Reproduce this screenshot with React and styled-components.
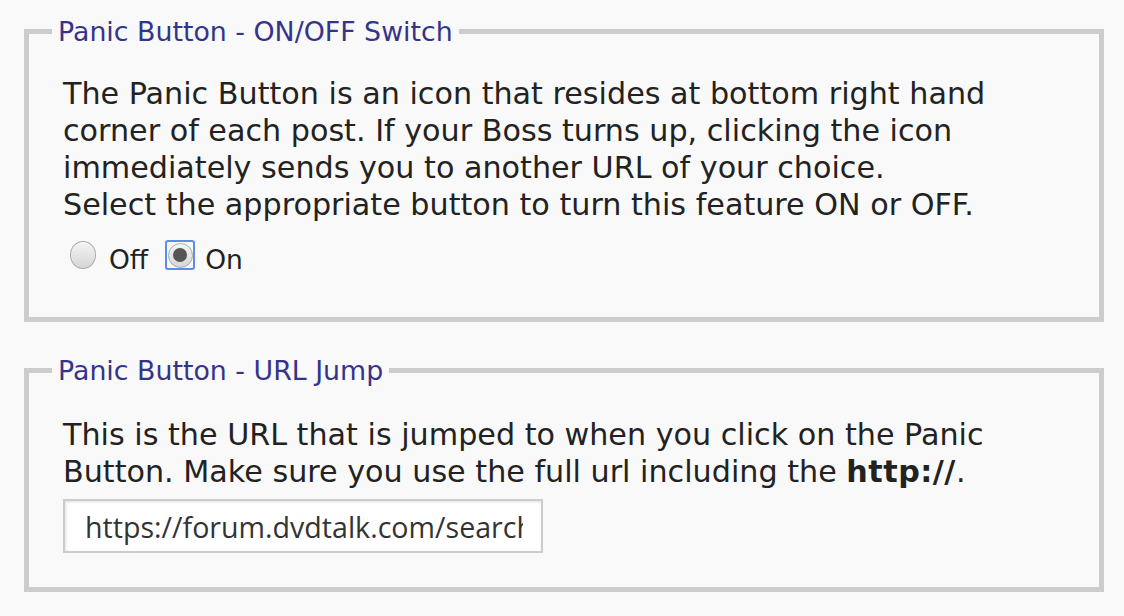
import React from "react";
import styled, { createGlobalStyle } from "styled-components";

const GlobalStyle = createGlobalStyle`
  html, body {
    margin: 0;
    padding: 0;
    background: #f9f9f9;
  }
  body {
    font-family: "DejaVu Sans", Verdana, sans-serif;
    color: #222;
  }
`;

const Page = styled.div`
  padding: 16px 20px 0 24px;
  width: 1080px;
`;

const Panel = styled.fieldset`
  margin: 0 0 ${(p) => p.$gap || 0}px 0;
  border: 5px solid #ccc;
  padding: ${(p) => p.$top}px 30px ${(p) => p.$bottom}px 34px;
  min-width: 0;
`;

const Legend = styled.legend`
  font-size: 26.8px;
  line-height: 31px;
  color: #35348a;
  padding: 0 6px;
  margin-left: -11px;
`;

const Text = styled.p`
  margin: 0;
  font-size: 30.2px;
  line-height: 37px;
  white-space: nowrap;
`;

const Strong = styled.b`
  font-weight: bold;
  letter-spacing: 0.5px;
`;

const RadioRow = styled.div`
  display: flex;
  align-items: center;
  margin-top: 17px;
  padding-left: 5px;
  gap: 18px;
`;

const Option = styled.label`
  display: flex;
  align-items: center;
  gap: 11px;
  font-size: 26.5px;
  line-height: 1;
  cursor: pointer;
`;

const RadioBox = styled.span`
  width: 30px;
  height: 30px;
  margin-bottom: 11px;
  box-sizing: border-box;
  display: flex;
  align-items: center;
  justify-content: center;
  border-radius: 3px;
  border: 2px solid ${(p) => (p.$focused ? "#5b8ee8" : "transparent")};
  margin-left: ${(p) => (p.$focused ? "-1px" : "0")};
  margin-right: ${(p) => (p.$focused ? "-1px" : "0")};
`;

const Circle = styled.span`
  width: ${(p) => (p.$checked ? 25 : 28)}px;
  height: ${(p) => (p.$checked ? 25 : 28)}px;
  box-sizing: border-box;
  border-radius: 50%;
  border: 1px solid #aaa;
  background: linear-gradient(#f4f4f4, #d6d6d6);
  display: flex;
  align-items: center;
  justify-content: center;
  box-shadow: inset 0 1px 1px rgba(255, 255, 255, 0.8);
`;

const Dot = styled.span`
  width: 14px;
  height: 14px;
  border-radius: 50%;
  background: #555;
`;

const UrlInput = styled.input`
  display: block;
  margin-top: 9px;
  width: 480px;
  height: 54px;
  box-sizing: border-box;
  border: 2px solid #ccc;
  box-shadow: inset 1px 1px 3px rgba(0, 0, 0, 0.12);
  background: #fff;
  padding: 0 18px 0 20px;
  font-family: "Open Sans", "Segoe UI", sans-serif;
  font-size: 28.6px;
  color: #333;
  outline: none;
`;

function Radio({ checked, focused }) {
  return (
    <RadioBox $focused={focused}>
      <Circle $checked={checked}>{checked && <Dot />}</Circle>
    </RadioBox>
  );
}

export default function App() {
  return (
    <>
      <GlobalStyle />
      <Page>
        <Panel $top={28} $bottom={36} $gap={33}>
          <Legend>Panic Button - ON/OFF Switch</Legend>
          <Text>
            The Panic Button is an icon that resides at bottom right hand
            <br />
            corner of each post. If your Boss turns up, clicking the icon
            <br />
            immediately sends you to another URL of your choice.
            <br />
            Select the appropriate button to turn this feature ON or OFF.
          </Text>
          <RadioRow>
            <Option>
              <Radio />
              Off
            </Option>
            <Option>
              <Radio checked focused />
              On
            </Option>
          </RadioRow>
        </Panel>
        <Panel $top={30} $bottom={34}>
          <Legend>Panic Button - URL Jump</Legend>
          <Text>
            This is the URL that is jumped to when you click on the Panic
            <br />
            Button. Make sure you use the full url including the{" "}
            <Strong>http://</Strong>.
          </Text>
          <UrlInput
            type="text"
            defaultValue="https://forum.dvdtalk.com/search.php?do=getnew"
            readOnly
          />
        </Panel>
      </Page>
    </>
  );
}
